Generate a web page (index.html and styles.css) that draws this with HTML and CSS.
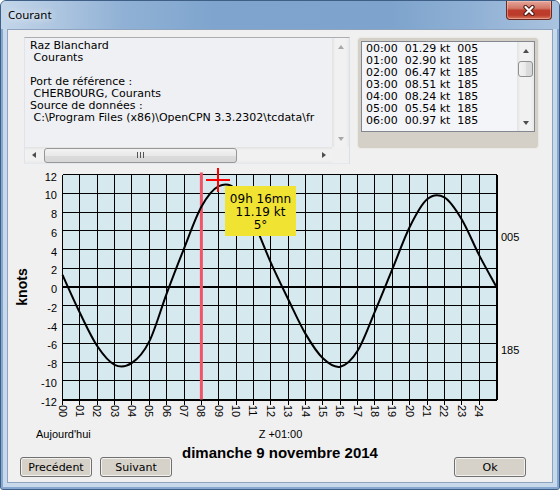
FILE: index.html
```html
<!DOCTYPE html>
<html lang="fr">
<head>
    <meta charset="UTF-8">
    <title>Courant</title>
    <link rel="stylesheet" href="styles.css">
</head>
<body>
    <div class="window">
        <div class="titlebar">
            <span class="title">Courant</span>
            <button class="close" aria-label="Fermer">
                <svg width="14" height="11" viewBox="0 0 14 11">
                    <path d="M3.5 2 L10.5 9 M10.5 2 L3.5 9" stroke="#4a1a12" stroke-width="4.2" stroke-linecap="round"/>
                    <path d="M3.5 2 L10.5 9 M10.5 2 L3.5 9" stroke="#fff" stroke-width="2.2" stroke-linecap="round"/>
                </svg>
            </button>
        </div>

        <div class="client">
            <div class="top">
                <div class="infobox">
                    <div class="info-text">Raz Blanchard
 Courants

Port de référence :
 CHERBOURG, Courants
Source de données :
 C:\Program Files (x86)\OpenCPN 3.3.2302\tcdata\fr</div>
                    <div class="vscroll off">
                        <span class="arr up"></span>
                        <span class="arr down"></span>
                    </div>
                    <div class="hscroll">
                        <span class="arr left"></span>
                        <span class="hthumb"><span class="grip"></span></span>
                        <span class="arr right"></span>
                    </div>
                    <div class="corner"></div>
                </div>

                <div class="listpanel">
                    <div class="listbox">
                        <div class="list-rows">
                            <div>00:00  01.29 kt  005</div>
                            <div>01:00  02.90 kt  185</div>
                            <div>02:00  06.47 kt  185</div>
                            <div>03:00  08.51 kt  185</div>
                            <div>04:00  08.24 kt  185</div>
                            <div>05:00  05.54 kt  185</div>
                            <div>06:00  00.97 kt  185</div>
                        </div>
                        <div class="vscroll">
                            <span class="arr up"></span>
                            <span class="vthumb"></span>
                            <span class="arr down"></span>
                        </div>
                    </div>
                </div>
            </div>

            <svg class="chart" id="chart" width="544" height="277"></svg>

            <div class="bottom">
                <div class="nav">
                    <button class="btn">Precédent</button>
                    <button class="btn">Suivant</button>
                </div>
                <div class="date">dimanche 9 novembre 2014</div>
                <div class="actions">
                    <button class="btn">Ok</button>
                </div>
            </div>
        </div>
    </div>

    <script>
        // vitesse du courant heure par heure (+ = 005, - = 185)
        const values = [1.29, -2.75, -6.3, -8.3, -8.1, -5.8, -0.7, 4.1, 8.55, 10.75, 10.4, 7.0, 2.6,
                        -1.3, -5.0, -7.6, -8.5, -6.8, -2.6, 1.9, 6.4, 9.35, 9.55, 7.2, 3.4, 0];

        const NS = 'http://www.w3.org/2000/svg';
        const chart = document.getElementById('chart');
        const L = 54.5, R = 488.5, T = 9.5, B = 234.5;
        const hw = (R - L) / 25;
        const rh = (B - T) / 12;

        function add(parent, tag, attrs, text) {
            const el = document.createElementNS(NS, tag);
            for (const k in attrs) el.setAttribute(k, attrs[k]);
            if (text !== undefined) el.textContent = text;
            parent.appendChild(el);
            return el;
        }

        const xOf = h => L + h * hw;
        const yOf = v => T + (12 - v) / 2 * rh;

        add(chart, 'rect', { x: L, y: T, width: R - L, height: B - T, fill: '#d6e9ef' });

        const grid = add(chart, 'g', { stroke: '#000', 'shape-rendering': 'crispEdges' });
        for (let h = 0; h <= 25; h++) {
            const x = xOf(h);
            add(grid, 'line', { x1: x, y1: T, x2: x, y2: h < 25 ? B + 5 : B, 'stroke-width': h === 25 ? 2 : 1 });
        }
        for (let i = 0; i <= 12; i++) {
            const y = T + i * rh;
            add(grid, 'line', { x1: L, y1: y, x2: R, y2: y, 'stroke-width': (i === 6 || i === 12) ? 2 : 1 });
        }

        const labels = add(chart, 'g', { 'font-family': 'Liberation Sans, Arial, sans-serif', 'font-size': 11, fill: '#000' });
        for (let i = 0; i <= 12; i++) {
            add(labels, 'text', { x: 49, y: T + i * rh + 6, 'text-anchor': 'end' }, String(12 - 2 * i));
        }
        for (let h = 0; h <= 24; h++) {
            const x = xOf(h);
            add(labels, 'text', { x: 0, y: 0, 'dominant-baseline': 'central',
                transform: 'translate(' + x + ' 240) rotate(90)' }, String(h).padStart(2, '0'));
        }
        add(labels, 'text', { x: 493, y: 76 }, '005');
        add(labels, 'text', { x: 493, y: 189 }, '185');
        add(labels, 'text', { x: 28, y: 273 }, "Aujourd'hui");
        add(labels, 'text', { x: 272.5, y: 273, 'text-anchor': 'middle' }, 'Z +01:00');
        add(chart, 'text', { x: 14, y: 122, 'text-anchor': 'middle', 'dominant-baseline': 'central',
            transform: 'rotate(-90 14 122)', 'font-family': 'Liberation Sans, Arial, sans-serif',
            'font-size': 14, 'font-weight': 'bold' }, 'knots');

        // heure courante
        add(chart, 'rect', { x: xOf(8) - 1.5, y: 7.5, width: 3, height: B - 7.5, fill: '#ef5567' });

        // courbe (Catmull-Rom -> Bezier)
        const pts = values.map((v, h) => [xOf(h), yOf(v)]);
        const P = i => pts[Math.max(0, Math.min(pts.length - 1, i))];
        let d = 'M' + pts[0][0] + ' ' + pts[0][1];
        for (let i = 0; i < pts.length - 1; i++) {
            const p0 = P(i - 1), p1 = P(i), p2 = P(i + 1), p3 = P(i + 2);
            const c1 = [p1[0] + (p2[0] - p0[0]) / 6, p1[1] + (p2[1] - p0[1]) / 6];
            const c2 = [p2[0] - (p3[0] - p1[0]) / 6, p2[1] - (p3[1] - p1[1]) / 6];
            d += ' C' + c1.join(' ') + ' ' + c2.join(' ') + ' ' + p2.join(' ');
        }
        add(chart, 'path', { d: d, fill: 'none', stroke: '#000', 'stroke-width': 2, 'stroke-linejoin': 'round' });

        // curseur
        const cross = add(chart, 'g', { stroke: '#ff0000', 'stroke-width': 2, 'shape-rendering': 'crispEdges' });
        add(cross, 'line', { x1: 210, y1: 3, x2: 210, y2: 27 });
        add(cross, 'line', { x1: 198, y1: 15, x2: 222, y2: 15 });

        const tip = add(chart, 'g', { 'font-family': 'DejaVu Sans, sans-serif', 'font-size': 12, 'text-anchor': 'middle' });
        add(tip, 'rect', { x: 217, y: 21, width: 71, height: 50, fill: '#f1e332' });
        add(tip, 'text', { x: 252.5, y: 37.7 }, '09h 16mn');
        add(tip, 'text', { x: 252.5, y: 51.1 }, '11.19 kt');
        add(tip, 'text', { x: 252.5, y: 64.4 }, '5°');
    </script>
</body>
</html>
```

FILE: styles.css
```css
* {
    margin: 0;
    padding: 0;
    box-sizing: border-box;
}

body {
    width: 560px;
    height: 490px;
    overflow: hidden;
    background: #fff;
    font-family: "DejaVu Sans", sans-serif;
    font-size: 11px;
    color: #000;
}

.window {
    width: 560px;
    height: 490px;
    display: flex;
    flex-direction: column;
    border: 1px solid #3f5f86;
    border-radius: 6px 6px 3px 3px;
    background: #c8d9ec;
    box-shadow: inset 0 0 0 2px #86a7cf;
    overflow: hidden;
}

/* barre de titre */
.titlebar {
    height: 28px;
    display: flex;
    align-items: flex-start;
    background: linear-gradient(90deg, #c3d6ea 0%, #b2c9e2 8%, #90b1d5 22%, #7fa5ce 38%, #7ea4cd 70%, #8fb0d4 84%, #aac3df 100%);
}

.title {
    padding-left: 7px;
    font-family: "Noto Sans", sans-serif;
    font-size: 11.5px;
    line-height: 28px;
    color: #000;
    text-shadow: 0 0 6px rgba(255, 255, 255, 0.9), 0 0 12px rgba(255, 255, 255, 0.7);
}

.close {
    margin-left: auto;
    margin-right: 7px;
    width: 46px;
    height: 19px;
    display: flex;
    align-items: center;
    justify-content: center;
    border: 1px solid #6a2a22;
    border-top: none;
    border-radius: 0 0 4px 4px;
    background: linear-gradient(#e3a69a 0%, #d27868 40%, #bd3c2c 52%, #bb3a29 78%, #d6755c 100%);
    box-shadow: inset 0 0 0 1px rgba(255, 210, 200, 0.45);
}

.close svg {
    display: block;
}

/* zone client */
.client {
    margin: 0 6px 6px;
    height: 454px;
    display: flex;
    flex-direction: column;
    border: 1px solid #8ea3be;
    background: #f0f0f0;
}

.top {
    height: 135px;
    display: flex;
    align-items: flex-start;
    padding: 7px 0 0 16px;
}

.infobox {
    width: 326px;
    height: 127px;
    display: grid;
    grid-template-columns: 1fr 17px;
    grid-template-rows: 1fr 16px;
    border: 1px solid;
    border-color: #abadb3 #dbdfe6 #e3e9ef #e2e3ea;
    background: #eff0f3;
}

.info-text {
    padding: 2px 5px;
    white-space: pre;
    overflow: hidden;
    line-height: 12px;
}

.vscroll {
    display: flex;
    flex-direction: column;
    align-items: center;
    background: linear-gradient(90deg, #e2e2e2, #f1f1f1 20%, #f1f1f1 80%, #e9e9e9);
    color: #4d4d4d;
}

.vscroll.off {
    justify-content: space-between;
    color: #a8a8a8;
}

.hscroll {
    display: flex;
    align-items: center;
    background: linear-gradient(#e2e2e2, #f1f1f1 20%, #f1f1f1 80%, #e9e9e9);
    color: #4d4d4d;
}

.corner {
    background: #f0f0f0;
}

.arr {
    width: 17px;
    height: 17px;
    flex: none;
    display: flex;
    align-items: center;
    justify-content: center;
}

.arr::before {
    content: "";
    border: 0 solid transparent;
}

.up::before {
    border-width: 0 3.5px 4px;
    border-bottom-color: currentColor;
}

.down::before {
    border-width: 4px 3.5px 0;
    border-top-color: currentColor;
}

.left::before {
    border-width: 3.5px 4px 3.5px 0;
    border-right-color: currentColor;
}

.right::before {
    border-width: 3.5px 0 3.5px 4px;
    border-left-color: currentColor;
}

.hthumb {
    width: 193px;
    height: 15px;
    margin: 0 auto 0 2px;
    display: flex;
    align-items: center;
    justify-content: center;
    border: 1px solid #979797;
    border-radius: 3px;
    background: linear-gradient(#f3f3f3, #e9e9e9 50%, #dcdcdc 51%, #d7d7d7);
}

.grip {
    width: 7px;
    height: 6px;
    background: repeating-linear-gradient(90deg, #555 0 1px, transparent 1px 3px);
}

.vthumb {
    width: 15px;
    height: 16px;
    margin-top: 2px;
    border: 1px solid #8e8f8f;
    border-radius: 3px;
    background: linear-gradient(90deg, #f3f3f3, #e9e9e9 50%, #dcdcdc 51%, #d7d7d7);
}

.vscroll .down {
    margin-top: auto;
}

/* liste des heures */
.listpanel {
    width: 182px;
    height: 112px;
    margin-left: 7px;
    padding: 3px;
    border: 1px solid #ebe9e4;
    border-radius: 4px;
    background: #d4d0c8;
}

.listbox {
    height: 91px;
    display: flex;
    border: 1px solid #828790;
    background: #f4f5f9;
}

.list-rows {
    flex: 1;
    padding: 1px 0 0 4px;
    line-height: 12px;
    overflow: hidden;
}

.list-rows div {
    white-space: pre;
}

/* graphique */
.chart {
    display: block;
}

/* bas de fenêtre */
.bottom {
    flex: 1;
    display: grid;
    grid-template-columns: 1fr auto 1fr;
}

.nav {
    display: flex;
    gap: 8px;
    padding: 15px 0 0 12px;
}

.date {
    padding-top: 1px;
    font-family: "Liberation Sans", Arial, sans-serif;
    font-weight: bold;
    font-size: 15px;
    line-height: 20px;
}

.actions {
    display: flex;
    justify-content: flex-end;
    align-items: flex-start;
    padding: 15px 26px 0 0;
}

.btn {
    width: 72px;
    height: 20px;
    font-family: "DejaVu Sans", sans-serif;
    font-size: 11px;
    color: #000;
    border: 1px solid #707070;
    border-radius: 3px;
    background: #d6d2ca;
    box-shadow: inset 0 0 0 1px #f3f1ed;
}
```
